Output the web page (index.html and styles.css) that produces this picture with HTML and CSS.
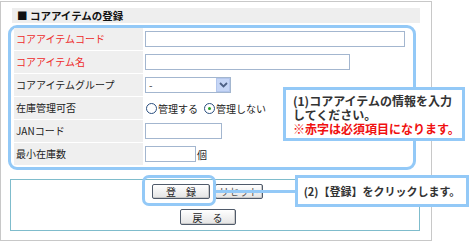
FILE: index.html
```html
<!DOCTYPE html>
<html lang="ja">
<head>
<meta charset="utf-8">
<link rel="stylesheet" href="styles.css">
</head>
<body>
<div class="stage">
  <div class="frame">
    <div class="title">■ コアアイテムの登録</div>
    <div class="formbox">
      <div class="row"><div class="label req">コアアイテムコード</div><div class="value"><span class="input w-code"></span></div></div>
      <div class="row"><div class="label req">コアアイテム名</div><div class="value"><span class="input w-name"></span></div></div>
      <div class="row"><div class="label">コアアイテムグループ</div><div class="value"><span class="select"><span class="sel-text">-</span><span class="sel-btn"><svg width="9" height="6" viewBox="0 0 9 6"><path d="M1 1 L4.5 4.5 L8 1" fill="none" stroke="#4d6185" stroke-width="1.8"/></svg></span></span></div></div>
      <div class="row"><div class="label">在庫管理可否</div><div class="value radios"><span class="radio"></span><span class="rlabel">管理する</span><span class="radio checked"></span><span class="rlabel">管理しない</span></div></div>
      <div class="row"><div class="label">JANコード</div><div class="value"><span class="input w-jan"></span></div></div>
      <div class="row"><div class="label">最小在庫数</div><div class="value"><span class="input w-min"></span><span class="unit">個</span></div></div>
    </div>
    <div class="actions">
      <div class="btnrow"><span class="btn b-reg">登　録</span><span class="btn b-reset">リセット</span></div>
      <div class="btnrow"><span class="btn b-back">戻　る</span></div>
    </div>
  </div>
  <div class="hl-btn"></div>
  <div class="connector"></div>
  <div class="callout c1">
    <div class="line">(1)コアアイテムの情報を入力</div>
    <div class="line">してください。</div>
    <div class="line red">※赤字は必須項目になります。</div>
  </div>
  <div class="callout c2">(2)【登録】をクリックします。</div>
</div>
</body>
</html>
```

FILE: styles.css
```css
* { box-sizing: border-box; }
body {
  margin: 0;
  background: #fff;
  font-family: "Noto Sans CJK JP", "Noto Sans", sans-serif;
  color: #333;
}
.stage {
  position: relative;
  width: 471px;
  height: 242px;
  padding-top: 1px;
}
.frame {
  width: 432px;
  height: 240px;
  border: 1px solid #c8c8c8;
  display: flex;
  flex-direction: column;
}
.title {
  margin: 6px 11px 0 11px;
  height: 15px;
  background: #eeeeee;
  font-size: 10.5px;
  font-weight: bold;
  line-height: 15px;
  padding-left: 5px;
  color: #111;
}
.formbox {
  margin: 2px 15px 0 7px;
  width: 408px;
  border: 3px solid #93c9f7;
  border-radius: 9px;
  padding: 0 3px 2px 3px;
  display: flex;
  flex-direction: column;
  gap: 1px;
}
.row {
  display: grid;
  grid-template-columns: 129px 1fr;
  height: 22px;
}
.label {
  background: #efefef;
  font-size: 10px;
  line-height: 22px;
  padding-left: 2px;
  color: #222;
}
.label.req { color: #ee2b2b; }
.value {
  display: flex;
  align-items: center;
  padding-left: 2px;
}
.input {
  display: block;
  height: 16px;
  border: 1px solid #a3b6cf;
  background: #fff;
}
.w-code { width: 260px; }
.w-name { width: 205px; }
.w-jan { width: 77px; }
.w-min { width: 51px; }
.unit { font-size: 10px; margin-left: 1px; color: #222; }
.select {
  display: flex;
  width: 86px;
  height: 16px;
  border: 1px solid #a3b6cf;
  background: #fff;
}
.sel-text { flex: 1; font-size: 10px; line-height: 14px; padding-left: 3px; }
.sel-btn {
  width: 14px;
  height: 14px;
  background: #c6d6f6;
  border: 1px solid #b3c6ec;
  display: flex;
  align-items: center;
  justify-content: center;
}
.radios { font-size: 10px; padding-left: 3px; color: #222; }
.radio {
  width: 11px;
  height: 11px;
  border: 1px solid #2b4f7f;
  border-radius: 50%;
  background: #fff;
  margin-right: 1px;
  position: relative;
}
.radio.checked::after {
  content: "";
  position: absolute;
  left: 3px;
  top: 3px;
  width: 3px;
  height: 3px;
  border-radius: 50%;
  background: #21a121;
}
.rlabel { margin-right: 6px; }
.actions {
  margin: 9px 12px 0 9px;
  width: 410px;
  height: 52px;
  border: 1px solid #7fbccc;
  padding: 4px 15px 0 0;
  display: flex;
  flex-direction: column;
  align-items: center;
  gap: 10px;
}
.btnrow { display: flex; gap: 5px; }
.btn {
  display: inline-flex;
  align-items: center;
  justify-content: center;
  height: 15px;
  border: 1px solid #4f5a6a;
  border-radius: 2px;
  background: linear-gradient(#ffffff, #e4e4e4);
  box-shadow: inset -1px -1px 0 #c9c9c9;
  font-size: 10px;
  color: #222;
}
.b-reg { width: 58px; }
.b-reset { width: 48px; color: #555; }
.b-back { width: 56px; height: 16px; }
.hl-btn {
  position: absolute;
  left: 142px;
  top: 175px;
  width: 74px;
  height: 31px;
  border: 3px solid #93c9f7;
  border-radius: 7px;
}
.connector {
  position: absolute;
  left: 216px;
  top: 190px;
  width: 80px;
  height: 3px;
  background: #93c9f7;
}
.callout {
  position: absolute;
  background: #fff;
  border: 3px solid #93c9f7;
  font-weight: bold;
  color: #333;
}
.c1 {
  left: 283px;
  top: 87px;
  width: 182px;
  height: 54px;
  font-size: 12px;
  padding: 4px 0 0 7px;
  white-space: nowrap;
  display: flex;
  flex-direction: column;
}
.line {
  height: 14px;
  line-height: 14px;
  overflow: visible;
}
.red { color: #f01010; }
.c2 {
  left: 295px;
  top: 175px;
  width: 174px;
  height: 32px;
  font-size: 11px;
  line-height: 26px;
  text-align: center;
  white-space: nowrap;
}
```
